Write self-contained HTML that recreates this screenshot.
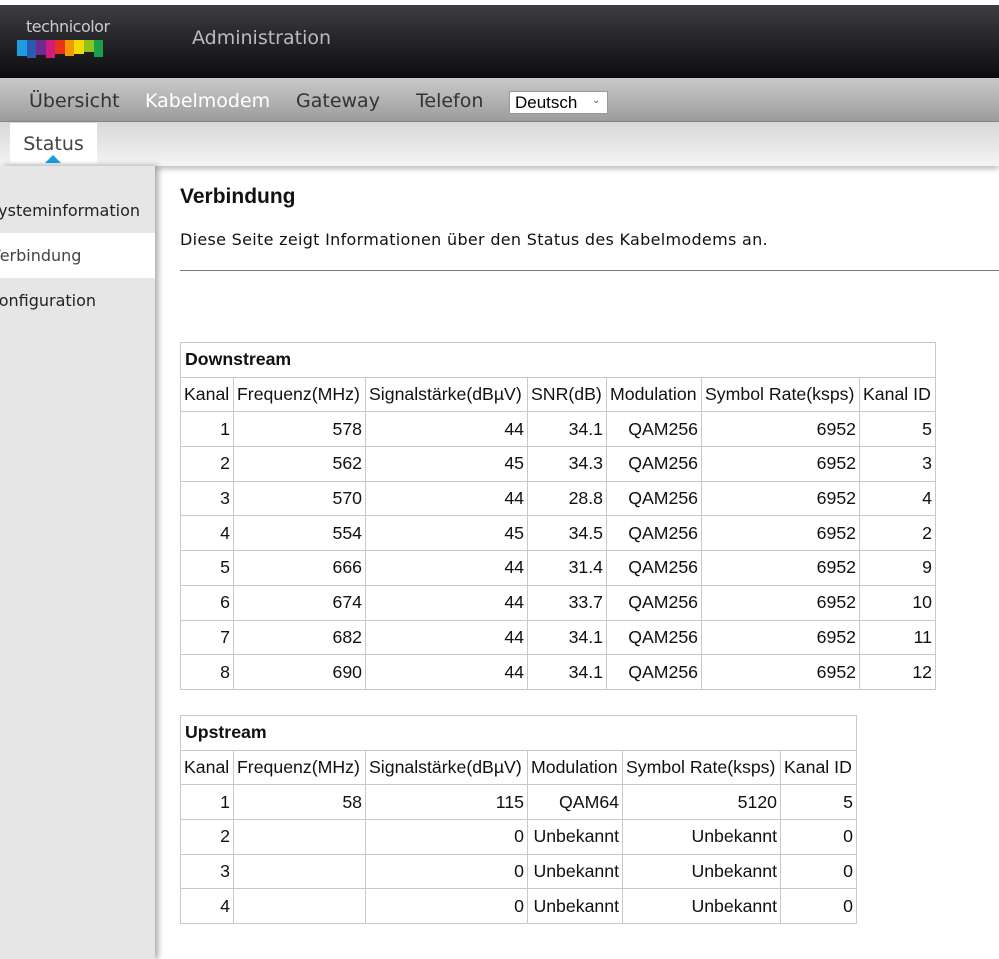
<!DOCTYPE html><html><head><meta charset="utf-8"><style>
*{margin:0;padding:0;box-sizing:border-box}
body{width:999px;height:959px;overflow:hidden;background:#fff;font-family:"DejaVu Sans",sans-serif;position:relative}
.hdr{position:absolute;top:5px;left:0;width:999px;height:73px;background:linear-gradient(#3d3d42,#0c0c0e)}
.nav{position:absolute;top:78px;left:0;width:999px;height:44px;background:linear-gradient(#c9c9c9,#9c9c9c);border-bottom:1px solid #888}
.nav span{position:absolute;top:12px;font-size:19px;color:#333}
.sub{position:absolute;top:122px;left:0;width:999px;height:44px;background:linear-gradient(#d8d8d8,#f4f4f4);box-shadow:0 3px 5px rgba(0,0,0,.25)}
.side{position:absolute;top:166px;left:0;width:155px;height:793px;background:#e6e6e6;box-shadow:3px 0 6px rgba(0,0,0,.35)}
.side div{height:45px;line-height:45px;font-size:16px;color:#222;white-space:nowrap;overflow:hidden}
table{position:absolute;left:180px;border-collapse:collapse;font-family:"Liberation Sans",sans-serif;font-size:17.7px;color:#111}
td{border:1px solid #c8c8c8;height:34.7px;padding:0 3px;text-align:right;white-space:nowrap}
tr.h td{text-align:left}
td.t{text-align:left;font-weight:bold;padding-left:4px}
</style></head><body>
<div class="hdr">
<div style="position:absolute;left:26px;top:12px;color:#ccc;font-size:16px;letter-spacing:-0.5px">technicolor</div>
<div style="position:absolute;left:17px;top:35px;width:86px;height:18px;display:flex;align-items:flex-start">
<i style="flex:1;height:16px;background:#1a9ee0"></i><i style="flex:1;height:18px;background:#2a5bb0"></i><i style="flex:1;height:15px;background:#6b2b93"></i><i style="flex:1;height:18px;background:#d01c7a"></i><i style="flex:1;height:14px;background:#e8321c"></i><i style="flex:1;height:16px;background:#f39a00"></i><i style="flex:1;height:14px;background:#f4d800"></i><i style="flex:1;height:12px;background:#8dc21f"></i><i style="flex:1;height:17px;background:#19a04a"></i></div>
<div style="position:absolute;left:192px;top:22px;color:#bbb;font-size:19px">Administration</div>
</div>
<div class="nav"><span style="left:29px">Übersicht</span><span style="left:145px;color:#fff">Kabelmodem</span><span style="left:296px">Gateway</span><span style="left:416px">Telefon</span>
<div style="position:absolute;left:509px;top:13px;width:99px;height:23px;background:#fff;border:1px solid #999;font-family:'Liberation Sans',sans-serif;font-size:17px;padding:1px 5px;color:#000">Deutsch <span style="position:absolute;left:82px;top:3px;font-size:10px;color:#555">&#8964;</span></div></div>
<div class="sub"><div style="position:absolute;left:10px;top:1px;width:87px;height:40px;background:#fff;font-size:19px;color:#444;text-align:center;line-height:42px">Status</div>
<div style="position:absolute;left:45px;top:33px;width:0;height:0;border-left:8px solid transparent;border-right:8px solid transparent;border-bottom:8px solid #1a9be6"></div></div>
<div class="side"><div style="margin-top:22px;margin-left:-12px">Systeminformation</div><div style="background:#fff;margin-left:-10px;color:#444">Verbindung</div><div style="margin-left:-11px">Konfiguration</div></div>
<div style="position:absolute;left:180px;top:185px;font-family:'Liberation Sans',sans-serif;font-weight:bold;font-size:21px;color:#111">Verbindung</div>
<div style="position:absolute;left:180px;top:230px;font-size:16px;color:#111;letter-spacing:0.3px">Diese Seite zeigt Informationen über den Status des Kabelmodems an.</div>
<div style="position:absolute;left:180px;top:270px;width:819px;height:1px;background:#777"></div>
<table style="top:342px;width:756px">
<tr><td class="t" colspan="7">Downstream</td></tr>
<tr class="h"><td style="width:53px">Kanal</td><td style="width:132px">Frequenz(MHz)</td><td style="width:162px">Signalstärke(dBµV)</td><td style="width:79px">SNR(dB)</td><td style="width:95px">Modulation</td><td style="width:158px">Symbol Rate(ksps)</td><td>Kanal ID</td></tr>
<tr><td>1</td><td>578</td><td>44</td><td>34.1</td><td>QAM256</td><td>6952</td><td>5</td></tr>
<tr><td>2</td><td>562</td><td>45</td><td>34.3</td><td>QAM256</td><td>6952</td><td>3</td></tr>
<tr><td>3</td><td>570</td><td>44</td><td>28.8</td><td>QAM256</td><td>6952</td><td>4</td></tr>
<tr><td>4</td><td>554</td><td>45</td><td>34.5</td><td>QAM256</td><td>6952</td><td>2</td></tr>
<tr><td>5</td><td>666</td><td>44</td><td>31.4</td><td>QAM256</td><td>6952</td><td>9</td></tr>
<tr><td>6</td><td>674</td><td>44</td><td>33.7</td><td>QAM256</td><td>6952</td><td>10</td></tr>
<tr><td>7</td><td>682</td><td>44</td><td>34.1</td><td>QAM256</td><td>6952</td><td>11</td></tr>
<tr><td>8</td><td>690</td><td>44</td><td>34.1</td><td>QAM256</td><td>6952</td><td>12</td></tr>
</table>
<table style="top:715px;width:677px">
<tr><td class="t" colspan="6">Upstream</td></tr>
<tr class="h"><td style="width:53px">Kanal</td><td style="width:132px">Frequenz(MHz)</td><td style="width:162px">Signalstärke(dBµV)</td><td style="width:95px">Modulation</td><td style="width:158px">Symbol Rate(ksps)</td><td>Kanal ID</td></tr>
<tr><td>1</td><td>58</td><td>115</td><td>QAM64</td><td>5120</td><td>5</td></tr>
<tr><td>2</td><td></td><td>0</td><td>Unbekannt</td><td>Unbekannt</td><td>0</td></tr>
<tr><td>3</td><td></td><td>0</td><td>Unbekannt</td><td>Unbekannt</td><td>0</td></tr>
<tr><td>4</td><td></td><td>0</td><td>Unbekannt</td><td>Unbekannt</td><td>0</td></tr>
</table>
</body></html>
